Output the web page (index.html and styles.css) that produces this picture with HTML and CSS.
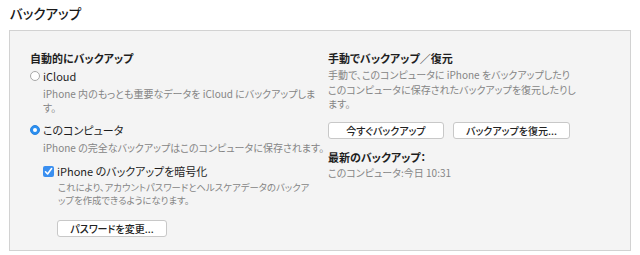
FILE: index.html
```html
<!DOCTYPE html>
<html lang="ja">
<head>
    <meta charset="UTF-8">
    <title>バックアップ</title>
    <link rel="stylesheet" href="styles.css">
</head>
<body>
    <h1 class="page-title">バックアップ</h1>
    <div class="backup-panel">
        <div class="column column-auto">
            <div class="section-title">自動的にバックアップ</div>
            <label class="option">
                <span class="radio"></span>
                <span>iCloud</span>
            </label>
            <p class="desc desc-radio">iPhone 内のもっとも重要なデータを iCloud にバックアップしま<br>す。</p>
            <label class="option option-second">
                <span class="radio radio-on"></span>
                <span>このコンピュータ</span>
            </label>
            <p class="desc desc-radio">iPhone の完全なバックアップはこのコンピュータに保存されます。</p>
            <label class="option option-check">
                <span class="check">
                    <svg width="9" height="9" viewBox="0 0 9 9"><path d="M1.5 4.8 L3.6 7 L7.6 1.6" fill="none" stroke="#fff" stroke-width="1.6" stroke-linecap="round" stroke-linejoin="round"/></svg>
                </span>
                <span>iPhone のバックアップを暗号化</span>
            </label>
            <p class="desc desc-check">これにより、アカウントパスワードとヘルスケアデータのバックア<br>ップを作成できるようになります。</p>
            <div class="btn-row btn-row-check">
                <button class="btn btn-password">パスワードを変更...</button>
            </div>
        </div>
        <div class="column column-manual">
            <div class="section-title">手動でバックアップ／復元</div>
            <p class="desc desc-manual">手動で、このコンピュータに iPhone をバックアップしたり<br>このコンピュータに保存されたバックアップを復元したりし<br>ます。</p>
            <div class="btn-row btn-row-manual">
                <button class="btn btn-now">今すぐバックアップ</button>
                <button class="btn btn-restore">バックアップを復元...</button>
            </div>
            <div class="section-title latest-title">最新のバックアップ：</div>
            <p class="desc latest-value">このコンピュータ:今日 10:31</p>
        </div>
    </div>
</body>
</html>
```
FILE: styles.css
```css
body {
    margin: 0;
    background: #fff;
    color: #222;
    font-family: "Noto Sans CJK JP", "Noto Sans", sans-serif;
    font-size: 11px;
    font-feature-settings: "palt";
}
.page-title {
    margin: 0;
    padding: 3px 0 0 10px;
    font-size: 13.5px;
    font-weight: 500;
    line-height: 20px;
    color: #1a1a1a;
}
.backup-panel {
    margin: 7px 9px 0 9px;
    height: 221px;
    box-sizing: border-box;
    background: #f4f4f4;
    border: 1px solid #d2d2d2;
    display: flex;
    padding: 20px 0 0 20px;
    gap: 18px;
}
.column {
    display: flex;
    flex-direction: column;
}
.column-auto {
    width: 280px;
}
.column-manual {
    width: 280px;
}
.section-title {
    font-weight: bold;
    line-height: 14px;
    color: #1e1e1e;
}
.option {
    display: flex;
    align-items: center;
    gap: 3px;
    line-height: 14px;
    margin-top: 4px;
    color: #1e1e1e;
}
.option-second {
    margin-top: 8px;
}
.radio {
    width: 10px;
    height: 10px;
    border-radius: 50%;
    border: 1px solid #a8a8a8;
    background: #fff;
    box-sizing: border-box;
    position: relative;
}
.radio-on {
    background: #2b8ff0;
    border-color: #2a84e0;
}
.radio-on::after {
    content: "";
    position: absolute;
    left: 2px;
    top: 2px;
    width: 4px;
    height: 4px;
    border-radius: 50%;
    background: #fff;
}
.option-check {
    margin-left: 13px;
    margin-top: 9px;
}
.check {
    width: 11px;
    height: 11px;
    border-radius: 2px;
    background: #3a8ff0;
    display: flex;
    align-items: center;
    justify-content: center;
}
.desc {
    margin: 4px 0 0 0;
    color: #858585;
    font-size: 10px;
    line-height: 14px;
    white-space: nowrap;
}
.desc-radio {
    padding-left: 13px;
}
.desc-check {
    margin-top: 3px;
    padding-left: 28px;
    font-size: 9.4px;
    line-height: 13px;
}
.desc-manual {
    margin-top: 3px;
    line-height: 14.5px;
}
.btn-row {
    display: flex;
    gap: 9px;
    margin-top: 13px;
}
.btn-row-check {
    padding-left: 27px;
}
.btn-row-manual {
    margin-top: 10px;
}
.btn {
    height: 17px;
    padding: 0;
    background: #fff;
    border: 1px solid #c8c8c8;
    border-radius: 3px;
    font-family: inherit;
    font-feature-settings: "palt";
    font-size: 10px;
    font-weight: 500;
    color: #222;
    line-height: 15px;
}
.btn-password {
    width: 110px;
}
.btn-now {
    width: 116px;
}
.btn-restore {
    width: 117px;
}
.latest-title {
    margin-top: 11px;
}
.latest-value {
    margin-top: 2px;
}
```
